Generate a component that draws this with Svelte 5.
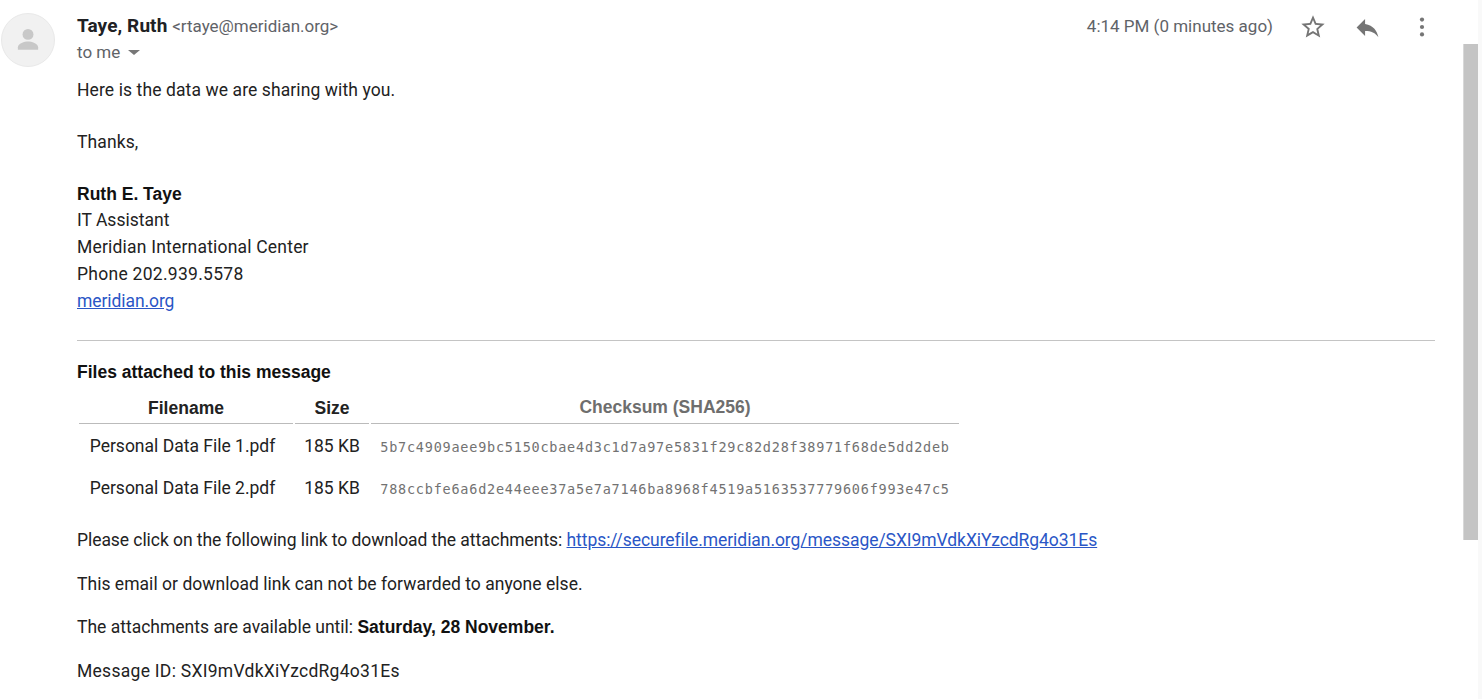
<script>
  const files = [
    { name: 'Personal Data File 1.pdf', size: '185 KB', sum: '5b7c4909aee9bc5150cbae4d3c1d7a97e5831f29c82d28f38971f68de5dd2deb' },
    { name: 'Personal Data File 2.pdf', size: '185 KB', sum: '788ccbfe6a6d2e44eee37a5e7a7146ba8968f4519a5163537779606f993e47c5' }
  ];
</script>

<div class="page">
  <div class="track"></div>
  <div class="thumb"></div>
  <header class="head">
    <div class="avatar">
      <svg viewBox="0 0 24 24" width="32" height="32"><circle cx="12" cy="7.8" r="4.1" fill="#c8c8c8" /><path d="M4.4 19.4v-2c0-2.9 5-4.3 7.6-4.3s7.6 1.4 7.6 4.3v2z" fill="#c8c8c8" /></svg>
    </div>
    <div class="who">
      <div class="from"><b>Taye, Ruth</b> <span class="addr">&lt;rtaye@meridian.org&gt;</span></div>
      <div class="to">to me <span class="caret"></span></div>
    </div>
    <div class="meta">
      <span class="time">4:14 PM (0 minutes ago)</span>
      <svg class="star" viewBox="0 0 24 24" width="28" height="28"><path d="M22 9.24l-7.19-.62L12 2 9.19 8.63 2 9.24l5.46 4.73L5.82 21 12 17.27 18.18 21l-1.63-7.03L22 9.24zM12 15.4l-3.76 2.27 1-4.28-3.32-2.88 4.38-.38L12 6.1l1.71 4.04 4.38.38-3.32 2.88 1 4.28L12 15.4z" fill="#757575" /></svg>
      <svg class="reply" viewBox="0 0 24 24" width="29" height="29"><path d="M10 9V5l-7 7 7 7v-4.1c5 0 8.5 1.6 11 5.1-1-5-4-10-11-11z" fill="#757575" /></svg>
      <svg class="more" viewBox="0 0 24 24" width="24" height="24"><circle cx="12" cy="4.6" r="2.1" fill="#757575" /><circle cx="12" cy="12" r="2.1" fill="#757575" /><circle cx="12" cy="19.4" r="2.1" fill="#757575" /></svg>
    </div>
  </header>

  <main class="body">
    <p class="s1">Here is the data we are sharing with you.</p>
    <p class="gap s1">Thanks,</p>
    <p class="sig"><strong>Ruth E. Taye</strong></p>
    <p>IT Assistant</p>
    <p class="s2">Meridian International Center</p>
    <p class="s3">Phone 202.939.5578</p>
    <p class="s4"><a href="#top">meridian.org</a></p>

    <hr />

    <h3>Files attached to this message</h3>
    <table>
      <thead>
        <tr>
          <th class="c1">Filename</th>
          <th class="c2">Size</th>
          <th class="c3">Checksum (SHA256)</th>
        </tr>
      </thead>
      <tbody>
        {#each files as f}
          <tr>
            <td class="c1">{f.name}</td>
            <td class="c2">{f.size}</td>
            <td class="sum">{f.sum}</td>
          </tr>
        {/each}
      </tbody>
    </table>

    <p class="line first s5">Please click on the following link to download the attachments: <a href="#top">https://securefile.meridian.org/message/SXI9mVdkXiYzcdRg4o31Es</a></p>
    <p class="line second s6">This email or download link can not be forwarded to anyone else.</p>
    <p class="line third">The attachments are available until: <strong>Saturday, 28 November.</strong></p>
    <p class="line s3">Message ID: SXI9mVdkXiYzcdRg4o31Es</p>
  </main>
</div>

<style>
  :global(body) {
    margin: 0;
    background: #fff;
    overflow: hidden;
  }

  .page {
    position: relative;
    width: 1482px;
    height: 699px;
    overflow: hidden;
    font-family: Roboto, sans-serif;
    font-size: 17.5px;
    color: #222;
  }

  /* scrollbar */
  .track {
    position: absolute;
    left: 1478px;
    top: 0;
    width: 4px;
    height: 699px;
    background: #f9f9f9;
  }

  .thumb {
    position: absolute;
    left: 1463px;
    top: 44px;
    width: 15px;
    height: 496px;
    background: #c4c4c4;
    border-left: 1px solid #d8d8d8;
    box-sizing: border-box;
  }

  .head {
    display: flex;
    padding: 13px 0 0 1px;
    height: 77px;
    box-sizing: border-box;
  }

  .avatar {
    width: 54px;
    height: 54px;
    border-radius: 50%;
    background: #f1f1f1;
    border: 1px solid #e9e9e9;
    box-sizing: border-box;
    display: flex;
    align-items: center;
    justify-content: center;
    margin-right: 22px;
  }

  .who {
    flex: 1;
  }

  .from {
    line-height: 26px;
    font-size: 19px;
  }

  .from b {
    font-weight: 700;
    color: #202124;
    letter-spacing: 0.1px;
  }

  .addr {
    font-size: 17px;
    color: #5f6368;
  }

  .to {
    font-size: 17px;
    color: #5f6368;
    line-height: 26px;
  }

  .caret {
    display: inline-block;
    width: 0;
    height: 0;
    margin: 0 0 3px 4px;
    border: 6px solid transparent;
    border-top: 5px solid #777;
    border-bottom: 0;
  }

  .meta {
    display: flex;
    align-items: flex-start;
    padding-right: 48px;
  }

  .time {
    font-size: 17px;
    color: #5f6368;
    line-height: 26px;
    margin-right: 26px;
  }

  .reply {
    margin-left: 26px;
  }

  .more {
    margin-left: 28px;
    margin-top: 2px;
  }

  .body {
    padding: 0 47px 0 77px;
  }

  p {
    margin: 0;
    line-height: 26.8px;
  }

  .gap {
    margin-top: 25.5px;
  }

  .sig {
    margin-top: 24.55px;
  }

  /* per-line tracking, the reference was hinted differently */
  .s1 {
    letter-spacing: 0.1px;
  }

  .s2 {
    letter-spacing: 0.2px;
  }

  .s3 {
    letter-spacing: 0.28px;
  }

  .s4 {
    letter-spacing: -0.08px;
  }

  .s5 {
    letter-spacing: -0.06px;
  }

  .s6 {
    letter-spacing: 0.03px;
  }

  strong {
    font-family: "Liberation Sans", sans-serif;
    font-weight: 700;
    color: #111;
  }

  a {
    color: #2a56c6;
  }

  hr {
    border: 0;
    border-top: 1px solid #c4c4c4;
    margin: 24.95px 0 18px;
  }

  h3 {
    margin: 0;
    font: 700 17.5px/26px "Liberation Sans", sans-serif;
    color: #111;
  }

  table {
    border-collapse: separate;
    border-spacing: 2px;
    margin-top: 7px;
  }

  th {
    font: 700 17.5px/26px "Liberation Sans", sans-serif;
    color: #222;
    padding: 0 10px 3px;
    border-bottom: 1px solid #bbb;
    text-align: center;
  }

  th.c3 {
    color: #6e6e6e;
    width: 568px;
  }

  th.c1 {
    width: 214px;
    padding: 0;
  }

  th.c2 {
    width: 74px;
    padding: 0;
  }

  td {
    height: 40px;
    padding: 0;
    text-align: center;
    white-space: nowrap;
    box-sizing: border-box;
  }

  td.c1 {
    padding-right: 7px;
  }

  .sum {
    font-family: "DejaVu Sans Mono", monospace;
    font-size: 13.5px;
    letter-spacing: 0.77px;
    color: #727272;
    padding-top: 2px;
  }

  .line {
    margin-top: 17px;
  }

  .line.second {
    margin-top: 17.4px;
  }

  .line.third {
    margin-top: 16.4px;
  }
</style>
